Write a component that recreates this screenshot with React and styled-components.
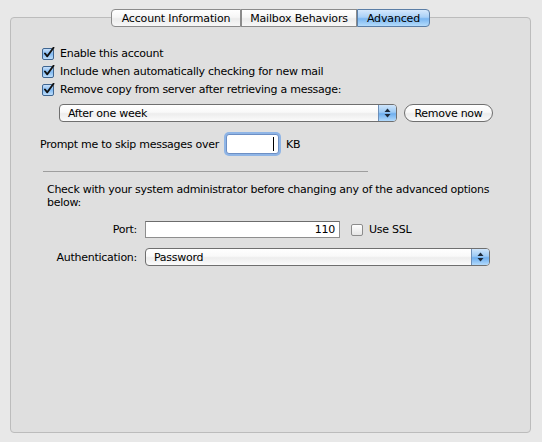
import React from 'react';
import styled, { createGlobalStyle } from 'styled-components';

const GlobalStyle = createGlobalStyle`
  html, body {
    margin: 0;
    padding: 0;
    background: #e8e8e8;
  }
  body {
    font-family: "DejaVu Sans", "Liberation Sans", sans-serif;
    font-size: 11px;
    letter-spacing: -0.27px;
    color: #000;
  }
`;

const tabs = [
  { label: 'Account Information', width: 130 },
  { label: 'Mailbox Behaviors', width: 116 },
  { label: 'Advanced', width: 73, active: true },
];

function CheckMark({ checked }) {
  return (
    <svg width="13" height="13" viewBox="0 0 13 13">
      <defs>
        <linearGradient id="chkOn" x1="0" y1="0" x2="0" y2="1">
          <stop offset="0" stopColor="#cfe4fb" />
          <stop offset="0.5" stopColor="#82baf2" />
          <stop offset="1" stopColor="#c4e2fd" />
        </linearGradient>
        <linearGradient id="chkOff" x1="0" y1="0" x2="0" y2="1">
          <stop offset="0" stopColor="#ffffff" />
          <stop offset="1" stopColor="#e4e4e4" />
        </linearGradient>
      </defs>
      <rect
        x="0.5"
        y="1.5"
        width="11"
        height="11"
        rx="1.5"
        fill={checked ? 'url(#chkOn)' : 'url(#chkOff)'}
        stroke={checked ? '#3f6590' : '#8c8c8c'}
      />
      {checked && (
        <path
          d="M3 6.5 L5.3 9.3 L11.5 0.8"
          fill="none"
          stroke="#111"
          strokeWidth="1.9"
          strokeLinecap="round"
          strokeLinejoin="round"
        />
      )}
    </svg>
  );
}

function Stepper() {
  return (
    <ArrowBox>
      <svg width="7" height="10" viewBox="0 0 7 10">
        <path d="M3.5 0.5 L6.5 4 L0.5 4 Z" fill="#1d2a3a" />
        <path d="M3.5 9.5 L6.5 6 L0.5 6 Z" fill="#1d2a3a" />
      </svg>
    </ArrowBox>
  );
}

function Popup({ value, width }) {
  return (
    <PopupBox $width={width}>
      <PopupText>{value}</PopupText>
      <Stepper />
    </PopupBox>
  );
}

export default function App() {
  return (
    <>
      <GlobalStyle />
      <Page>
        <TabBar>
          {tabs.map((t) => (
            <Tab key={t.label} $width={t.width} $active={t.active}>
              {t.label}
            </Tab>
          ))}
        </TabBar>
        <Panel>
          <CheckRow>
            <CheckMark checked />
            <span>Enable this account</span>
          </CheckRow>
          <CheckRow>
            <CheckMark checked />
            <span>Include when automatically checking for new mail</span>
          </CheckRow>
          <CheckRow>
            <CheckMark checked />
            <span>Remove copy from server after retrieving a message:</span>
          </CheckRow>

          <RemoveRow>
            <Popup value="After one week" width={338} />
            <PillButton>Remove now</PillButton>
          </RemoveRow>

          <PromptRow>
            <span>Prompt me to skip messages over</span>
            <FocusField>
              <Caret />
            </FocusField>
            <span>KB</span>
          </PromptRow>

          <Rule />

          <Notice>
            Check with your system administrator before changing any of the
            advanced options below:
          </Notice>

          <FormGrid>
            <FieldLabel>Port:</FieldLabel>
            <PortLine>
              <TextField>110</TextField>
              <CheckRow as="label" $inline>
                <CheckMark />
                <span>Use SSL</span>
              </CheckRow>
            </PortLine>
            <FieldLabel>Authentication:</FieldLabel>
            <Popup value="Password" width={345} />
          </FormGrid>
        </Panel>
      </Page>
    </>
  );
}

const Page = styled.div`
  width: 542px;
  height: 442px;
  box-sizing: border-box;
  padding: 9px 11px 0 10px;
  display: flex;
  flex-direction: column;
`;

const TabBar = styled.div`
  position: relative;
  z-index: 1;
  display: flex;
  justify-content: center;
  height: 18px;
`;

const Tab = styled.div`
  width: ${({ $width }) => $width}px;
  height: 18px;
  box-sizing: border-box;
  display: flex;
  align-items: center;
  justify-content: center;
  font-size: 11px;
  letter-spacing: -0.15px;
  border: 1px solid #8b8b8b;
  border-left: 1px solid #c8c8c8;
  background: ${({ $active }) =>
    $active
      ? 'linear-gradient(#d5e8fc 0%, #a9d0f7 45%, #7ab6f1 55%, #b5dcfc 100%)'
      : 'linear-gradient(#ffffff 0%, #f6f6f6 45%, #ebebeb 55%, #f7f7f7 100%)'};
  border-color: ${({ $active }) => ($active ? '#5b7ea6' : '#8b8b8b')};

  &:first-child {
    border-left: 1px solid #8b8b8b;
    border-radius: 4px 0 0 4px;
  }
  &:last-child {
    border-radius: 0 4px 4px 0;
  }
`;

const Panel = styled.div`
  margin-top: -10px;
  height: 416px;
  box-sizing: border-box;
  border: 1px solid #bcbcbc;
  border-radius: 4px;
  background: #dfdfdf;
  padding: 26px 0 0 31px;
  display: flex;
  flex-direction: column;
`;

const CheckRow = styled.div`
  display: ${({ $inline }) => ($inline ? 'inline-flex' : 'flex')};
  align-items: center;
  gap: 5px;
  height: 18px;
`;

const RemoveRow = styled.div`
  display: flex;
  align-items: center;
  gap: 7px;
  margin: 6px 0 0 17px;
`;

const PopupBox = styled.div`
  width: ${({ $width }) => $width}px;
  height: 18px;
  box-sizing: border-box;
  border: 1px solid #6f6f6f;
  border-radius: 4px;
  background: linear-gradient(#ffffff 0%, #f9f9f9 45%, #ededed 55%, #fbfbfb 100%);
  display: flex;
  align-items: center;
  overflow: hidden;
`;

const PopupText = styled.span`
  flex: 1;
  padding-left: 8px;
`;

const ArrowBox = styled.span`
  width: 17px;
  height: 100%;
  display: flex;
  align-items: center;
  justify-content: center;
  border-left: 1px solid #6d8fb8;
  background: linear-gradient(#cfe5fb 0%, #9ccaf5 45%, #6eaeee 55%, #b2dafc 100%);
`;

const PillButton = styled.div`
  width: 89px;
  height: 18px;
  box-sizing: border-box;
  border: 1px solid #6f6f6f;
  border-radius: 9px;
  background: linear-gradient(#ffffff 0%, #f8f8f8 45%, #ececec 55%, #fafafa 100%);
  display: flex;
  align-items: center;
  justify-content: center;
`;

const PromptRow = styled.div`
  display: flex;
  align-items: center;
  gap: 7px;
  margin: 12px 0 0 -2px;
  height: 20px;
`;

const FocusField = styled.div`
  width: 53px;
  height: 20px;
  box-sizing: border-box;
  border: 1px solid #6d8fc4;
  border-radius: 3px;
  box-shadow: 0 0 0 2px #8fb5e6;
  background: #fff;
  display: flex;
  justify-content: flex-end;
  align-items: center;
  padding-right: 4px;
`;

const Caret = styled.span`
  width: 1px;
  height: 14px;
  background: #000;
`;

const Rule = styled.div`
  width: 325px;
  height: 1px;
  background: #9e9e9e;
  margin: 17px 0 0 1px;
`;

const Notice = styled.p`
  margin: 11px 0 0 5px;
  width: 452px;
  line-height: 13px;
`;

const FormGrid = styled.div`
  display: grid;
  grid-template-columns: 101px auto;
  column-gap: 8px;
  row-gap: 10px;
  align-items: center;
  margin: 11px 0 0 -6px;
`;

const FieldLabel = styled.span`
  text-align: right;
`;

const PortLine = styled.div`
  display: flex;
  align-items: center;
  gap: 11px;
`;

const TextField = styled.div`
  width: 195px;
  height: 17px;
  box-sizing: border-box;
  border: 1px solid #8e8e8e;
  border-top-color: #6c6c6c;
  background: #fff;
  text-align: right;
  padding-right: 4px;
  line-height: 15px;
`;
